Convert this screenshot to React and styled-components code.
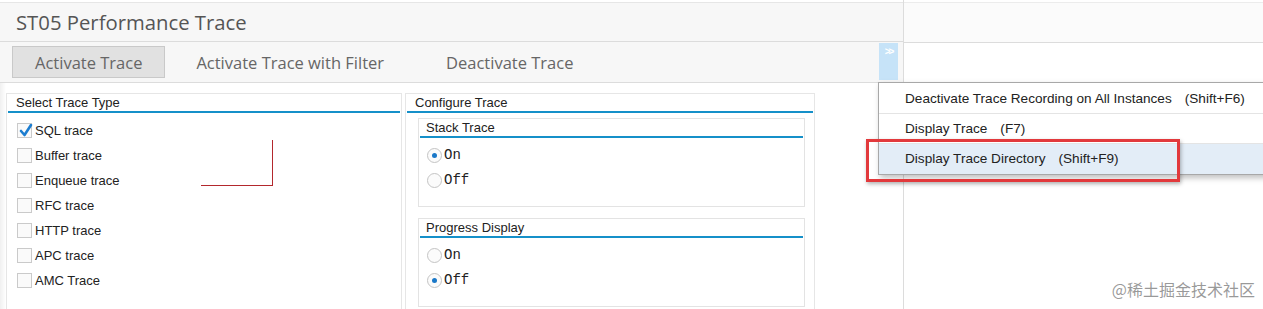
import React from "react";
import styled, { createGlobalStyle } from "styled-components";

const GlobalStyle = createGlobalStyle`
  body {
    margin: 0;
    background: #ffffff;
    font-family: "Liberation Sans", Arial, sans-serif;
  }
`;

const Screen = styled.div`
  position: relative;
  width: 1263px;
  height: 309px;
  overflow: hidden;
  display: flex;
  background: #ffffff;
`;

const MainPane = styled.div`
  width: 903px;
  display: flex;
  flex-direction: column;
  border-right: 1px solid #dcdcdc;
`;

const SidePane = styled.div`
  flex: 1;
  display: flex;
  flex-direction: column;
`;

const SideTop = styled.div`
  height: 39px;
  margin-top: 2px;
  background: #fbfbfb;
  border-top: 1px solid #ececec;
  border-bottom: 1px solid #dcdcdc;
`;

const TitleBar = styled.div`
  height: 38px;
  margin-top: 2px;
  border-top: 1px solid #e6e6e6;
  border-bottom: 1px solid #dcdcdc;
  background: #f7f7f7;
  display: flex;
  align-items: center;
  padding-left: 16px;
  font-family: "Open Sans", "Liberation Sans", sans-serif;
  font-size: 20.3px;
  color: #555;
`;

const Toolbar = styled.div`
  height: 40px;
  background: #f7f7f7;
  border-bottom: 1px solid #dcdcdc;
  display: flex;
  align-items: center;
  padding-left: 12px;
`;

const ToolButton = styled.div`
  height: 32px;
  box-sizing: border-box;
  display: flex;
  align-items: center;
  padding: 0 ${(p) => (p.$active ? "22px" : "30px")};
  font-family: "Open Sans", "Liberation Sans", sans-serif;
  font-size: 16.5px;
  color: #666;
  background: ${(p) => (p.$active ? "#e1e1e1" : "transparent")};
  border: 1px solid ${(p) => (p.$active ? "#c9c9c9" : "transparent")};
`;

const MoreButton = styled.div`
  margin-left: auto;
  margin-right: 5px;
  align-self: flex-start;
  margin-top: 1px;
  width: 19px;
  height: 37px;
  background: #c6e3f8;
  color: #fff;
  font-size: 10px;
  font-weight: bold;
  text-align: center;
  line-height: 18px;
  letter-spacing: -2px;
`;

const Content = styled.div`
  flex: 1;
  display: flex;
  gap: 3px;
  padding: 10px 0 0 6px;
  background: linear-gradient(90deg, #f0f0f0 0, #ffffff 6px);
`;

const Group = styled.div`
  width: ${(p) => p.$width}px;
  box-sizing: border-box;
  border: 1px solid #e6e6e6;
  border-bottom: none;
  background: #ffffff;
  padding: 0 1px;
`;

const GroupHeader = styled.div`
  height: 17px;
  padding-left: ${(p) => p.$indent || 8}px;
  border-bottom: 2px solid #1590c9;
  font-size: 13px;
  color: #222;
  line-height: 17px;
`;

const CheckList = styled.div`
  display: flex;
  flex-direction: column;
  padding: 10px 0 0 9px;
`;

const CheckRow = styled.label`
  height: 25px;
  display: flex;
  align-items: flex-start;
  font-size: 13px;
  color: #222;
  line-height: 16px;
`;

const Box = styled.span`
  width: 15px;
  height: 15px;
  box-sizing: border-box;
  border: 1px solid #cacaca;
  background: #fafafa;
  margin-right: 3px;
  position: relative;
`;

const SubGroups = styled.div`
  display: flex;
  flex-direction: column;
  gap: 11px;
  padding: 5px 8px 0 11px;
`;

const SubGroup = styled.div`
  height: 89px;
  box-sizing: border-box;
  border: 1px solid #e3e3e3;
  padding: 0 1px;
`;

const RadioList = styled.div`
  display: flex;
  flex-direction: column;
  padding: 10px 0 0 7px;
`;

const RadioRow = styled.label`
  height: 25px;
  display: flex;
  align-items: flex-start;
  font-family: "Liberation Mono", "Courier New", monospace;
  font-size: 14px;
  color: #222;
  line-height: 15px;
`;

const Radio = styled.span`
  width: 15px;
  height: 15px;
  box-sizing: border-box;
  border-radius: 50%;
  border: 1px solid #c4c4c4;
  background: #fbfbfb;
  margin-right: 2px;
  display: flex;
  align-items: center;
  justify-content: center;
  &::after {
    content: "";
    width: 5px;
    height: 5px;
    border-radius: 50%;
    background: ${(p) => (p.$on ? "#1a78c8" : "transparent")};
  }
`;

const Menu = styled.div`
  position: absolute;
  left: 878px;
  top: 82px;
  width: 420px;
  background: #ffffff;
  border: 1px solid #a8a8a8;
  box-shadow: 2px 3px 6px rgba(0, 0, 0, 0.25);
  padding-top: 1px;
`;

const MenuItem = styled.div`
  height: 29px;
  display: flex;
  align-items: center;
  padding-left: 26px;
  font-size: 13.6px;
  color: #222;
  background: ${(p) => (p.$selected ? "#e3edf7" : "#ffffff")};
  border-bottom: 1px solid ${(p) => (p.$last ? "transparent" : "#e4e4e4")};
  span {
    margin-left: 13px;
  }
`;

const Highlight = styled.div`
  position: absolute;
  left: 866px;
  top: 139px;
  width: 314px;
  height: 43px;
  box-sizing: border-box;
  border: 3px solid #e2393c;
  box-shadow: 1px 2px 4px rgba(0, 0, 0, 0.3);
`;

const Annotation = styled.div`
  position: absolute;
  left: 201px;
  top: 140px;
  width: 71px;
  height: 45px;
  border-right: 1px solid #b3282d;
  border-bottom: 1px solid #b3282d;
`;

const Watermark = styled.div`
  position: absolute;
  right: 8px;
  bottom: 8px;
  font-family: "Noto Sans CJK SC", "Liberation Sans", sans-serif;
  font-size: 16px;
  color: rgba(120, 120, 120, 0.75);
`;

const CheckMark = () => (
  <svg width="15" height="15" viewBox="0 0 15 15" style={{ position: "absolute", left: 1, top: -1 }}>
    <path d="M2 8 L5.5 12 L12 2" fill="none" stroke="#1b7dd0" strokeWidth="2.6" strokeLinecap="round" strokeLinejoin="round" />
  </svg>
);

const traceTypes = [
  { label: "SQL trace", checked: true },
  { label: "Buffer trace" },
  { label: "Enqueue trace" },
  { label: "RFC trace" },
  { label: "HTTP trace" },
  { label: "APC trace" },
  { label: "AMC Trace" },
];

const configs = [
  { title: "Stack Trace", value: "On" },
  { title: "Progress Display", value: "Off" },
];

const menuItems = [
  { label: "Deactivate Trace Recording on All Instances", key: "(Shift+F6)" },
  { label: "Display Trace", key: "(F7)" },
  { label: "Display Trace Directory", key: "(Shift+F9)", selected: true },
];

export default function App() {
  return (
    <>
      <GlobalStyle />
      <Screen>
        <MainPane>
          <TitleBar>ST05 Performance Trace</TitleBar>
          <Toolbar>
            <ToolButton $active>Activate Trace</ToolButton>
            <ToolButton>Activate Trace with Filter</ToolButton>
            <ToolButton>Deactivate Trace</ToolButton>
            <MoreButton>&gt;&gt;</MoreButton>
          </Toolbar>
          <Content>
            <Group $width={396}>
              <GroupHeader>Select Trace Type</GroupHeader>
              <CheckList>
                {traceTypes.map((t) => (
                  <CheckRow key={t.label}>
                    <Box>{t.checked && <CheckMark />}</Box>
                    {t.label}
                  </CheckRow>
                ))}
              </CheckList>
            </Group>
            <Group $width={410}>
              <GroupHeader>Configure Trace</GroupHeader>
              <SubGroups>
                {configs.map((c) => (
                  <SubGroup key={c.title}>
                    <GroupHeader $indent={6}>{c.title}</GroupHeader>
                    <RadioList>
                      {["On", "Off"].map((v) => (
                        <RadioRow key={v}>
                          <Radio $on={c.value === v} />
                          {v}
                        </RadioRow>
                      ))}
                    </RadioList>
                  </SubGroup>
                ))}
              </SubGroups>
            </Group>
          </Content>
        </MainPane>
        <SidePane>
          <SideTop />
        </SidePane>

        <Menu>
          {menuItems.map((m, i) => (
            <MenuItem key={m.label} $selected={m.selected} $last={i === menuItems.length - 1}>
              {m.label}
              <span>{m.key}</span>
            </MenuItem>
          ))}
        </Menu>
        <Highlight />
        <Annotation />
        <Watermark>@稀土掘金技术社区</Watermark>
      </Screen>
    </>
  );
}
